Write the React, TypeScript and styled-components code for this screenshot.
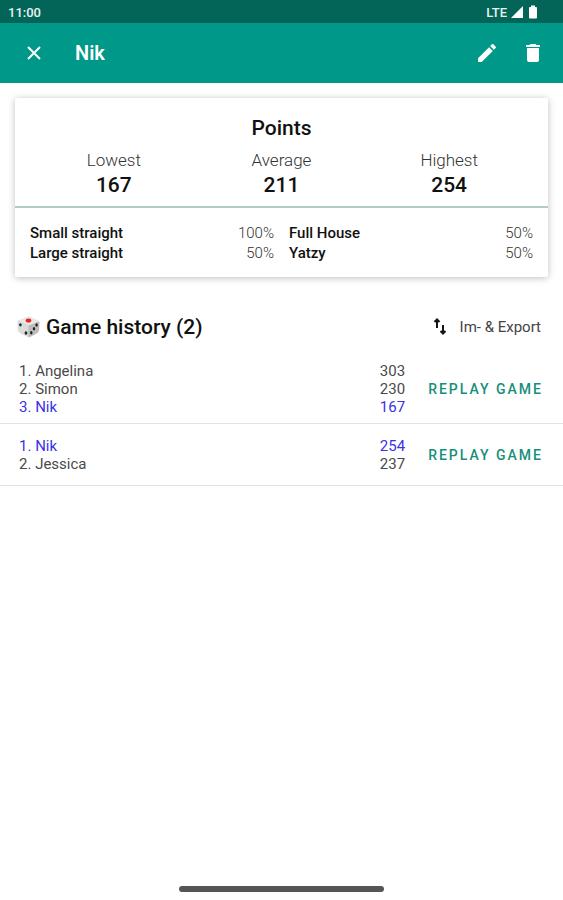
import React from "react";
import styled, { createGlobalStyle } from "styled-components";

const GlobalStyle = createGlobalStyle`
  *, *::before, *::after { box-sizing: border-box; }
  body {
    margin: 0;
    background: #fff;
    color: #111;
    font-family: Roboto, "Liberation Sans", sans-serif;
  }
  h1, h2, dl, dd, dt, ol, ul, p { margin: 0; padding: 0; }
  ol, ul { list-style: none; }
  button { border: 0; padding: 0; background: none; font: inherit; color: inherit; cursor: pointer; }
  svg { display: block; }
`;

const Screen = styled.div`
  min-height: 100vh;
  display: flex;
  flex-direction: column;
`;

const StatusBar = styled.div`
  display: flex;
  align-items: center;
  justify-content: space-between;
  height: 23px;
  padding: 1px 24px 0 8px;
  background: #036558;
  color: #e8f3f1;
  font-size: 13px;
  font-weight: 500;
`;

const StatusIcons = styled.div`
  display: flex;
  align-items: center;
  gap: 4px;
`;

const AppBar = styled.header`
  display: flex;
  align-items: center;
  height: 60px;
  padding: 0 18px 0 22px;
  background: #009888;
  color: #fff;
`;

const BarTitle = styled.h1`
  flex: 1;
  margin-left: 29px;
  font-size: 20px;
  font-weight: 600;
  line-height: 24px;
`;

const IconButton = styled.button`
  display: grid;
  place-items: center;
  width: 24px;
  height: 24px;
`;

const BarActions = styled.div`
  display: flex;
  gap: 22px;
`;

const Card = styled.section`
  margin: 15px 15px 0;
  border-radius: 2px;
  background: #fff;
  box-shadow: 0 1px 7px rgba(0, 0, 0, 0.26);
`;

const CardTitle = styled.h2`
  padding-top: 18px;
  text-align: center;
  font-size: 21px;
  font-weight: 500;
  line-height: 24px;
`;

const Scores = styled.dl`
  display: grid;
  grid-template-columns: repeat(3, 1fr);
  padding: 8px 15px;
  border-bottom: 2px solid #b3ccc6;
  text-align: center;
`;

const ScoreLabel = styled.dt`
  color: #333;
  font-size: 17px;
  font-weight: 300;
  line-height: 24px;
`;

const ScoreValue = styled.dd`
  font-size: 21px;
  font-weight: 500;
  line-height: 26px;
`;

const Rates = styled.dl`
  display: grid;
  grid-template-columns: 1fr 1fr;
  column-gap: 15px;
  padding: 15px 15px 14px;
  font-size: 15px;
  line-height: 20px;
`;

const Rate = styled.div`
  display: flex;
  justify-content: space-between;
`;

const RateName = styled.dt`
  font-weight: 500;
`;

const RateValue = styled.dd`
  color: #333;
  font-weight: 300;
`;

const HistoryHead = styled.div`
  display: flex;
  align-items: center;
  justify-content: space-between;
  margin-top: 37px;
  padding: 0 22px 0 17px;
`;

const HistoryTitle = styled.h2`
  display: flex;
  align-items: center;
  gap: 5px;
  font-size: 21px;
  font-weight: 500;
  line-height: 26px;
`;

const ExportButton = styled.button`
  display: flex;
  align-items: center;
  gap: 13px;
  font-size: 15px;
  color: #444;
`;

const Games = styled.ul`
  margin-top: 10px;
`;

const Game = styled.li`
  display: flex;
  align-items: center;
  padding: 12px 20px 7px 19px;
  border-bottom: 1px solid #e2e2e2;

  & + & {
    padding: 13px 20px 12px 19px;
  }
`;

const Players = styled.ol`
  flex: 1;
  margin-right: 23px;
`;

const Player = styled.li<{ $current: boolean }>`
  display: flex;
  justify-content: space-between;
  font-size: 15px;
  line-height: 18px;
  color: ${(p) => (p.$current ? "#3a32e6" : "#4a4a4a")};
`;

const ReplayButton = styled.button`
  color: #17907a;
  font-size: 14px;
  font-weight: 500;
  letter-spacing: 2px;
  line-height: 18px;
  text-transform: uppercase;
`;

const GestureArea = styled.footer`
  display: flex;
  justify-content: center;
  margin-top: auto;
  padding: 0 179px 8px;
`;

const GestureHandle = styled.div`
  flex: 1;
  height: 6px;
  border-radius: 3px;
  background: #555;
`;

const Signal = () => (
  <svg width="12" height="12" viewBox="0 0 12 12" fill="#fff" aria-hidden="true">
    <path d="M12 0v12H0z" />
  </svg>
);

const Battery = () => (
  <svg width="12" height="14" viewBox="0 0 12 14" fill="#fff" aria-hidden="true">
    <path d="M4 0.5h4v1.5h1q1 0 1 1v9.500q0 1-1 1H3q-1 0-1-1V3q0-1 1-1h1z" />
  </svg>
);

const Cross = () => (
  <svg width="24" height="24" viewBox="0 0 24 24" stroke="#fff" strokeWidth="2" aria-hidden="true">
    <path d="M6 6l12 12M18 6L6 18" />
  </svg>
);

const Pencil = () => (
  <svg width="24" height="24" viewBox="0 0 24 24" fill="#fff" aria-hidden="true">
    <path d="M20.710 7.040c.39-.39.39-1.040 0-1.410l-2.340-2.340c-.37-.39-1.020-.39-1.410 0l-1.840 1.830 3.750 3.750M3 17.250V21h3.750L17.810 9.930l-3.750-3.750L3 17.250z" />
  </svg>
);

const Trash = () => (
  <svg width="24" height="24" viewBox="0 0 24 24" fill="#fff" aria-hidden="true">
    <path d="M19 4h-3.500l-1-1h-5l-1 1H5v2h14M6 19a2 2 0 0 0 2 2h8a2 2 0 0 0 2-2V7H6v12z" />
  </svg>
);

const Swap = () => (
  <svg width="14" height="18" viewBox="0 0 14 18" fill="none" stroke="#151515" strokeWidth="2" aria-hidden="true">
    <path d="M4 10V2M10 7v8" />
    <path d="M1.500 4L4 1.500l2.500 2.500M7.500 13L10 15.500l2.500-2.500" />
  </svg>
);

const Die = () => (
  <svg width="24" height="22" viewBox="0 0 24 22" aria-hidden="true">
    <path d="M11.500 1L22 5.500L12 10L1 5z" fill="#e8e8e8" stroke="#e2e2e2" strokeLinejoin="round" />
    <path d="M1 5.500L12 10v11L3 16.500Q1.500 15.500 1.300 13z" fill="#dcdcdc" stroke="#d6d6d6" strokeLinejoin="round" />
    <path d="M22 6L12 10v11l8.500-4.500Q21.500 15.500 21.600 13z" fill="#bdbdbd" stroke="#bababa" strokeLinejoin="round" />
    <ellipse cx="11.500" cy="4.600" rx="2.800" ry="2" fill="#f0221c" />
    <g fill="#222">
      <ellipse cx="3.400" cy="8.800" rx="1.300" ry="1.600" />
      <ellipse cx="9" cy="17" rx="1.400" ry="1.700" />
      <ellipse cx="19.600" cy="9" rx="1.200" ry="1.700" />
      <ellipse cx="17" cy="12.800" rx="1.200" ry="1.700" />
      <ellipse cx="14.300" cy="16.800" rx="1.200" ry="1.700" />
    </g>
  </svg>
);

const scores = [
  { label: "Lowest", value: 167 },
  { label: "Average", value: 211 },
  { label: "Highest", value: 254 },
];

const rates = [
  { name: "Small straight", value: "100%" },
  { name: "Full House", value: "50%" },
  { name: "Large straight", value: "50%" },
  { name: "Yatzy", value: "50%" },
];

const games = [
  [
    { name: "Angelina", points: 303 },
    { name: "Simon", points: 230 },
    { name: "Nik", points: 167 },
  ],
  [
    { name: "Nik", points: 254 },
    { name: "Jessica", points: 237 },
  ],
];

export default function App() {
  return (
    <Screen>
      <GlobalStyle />
      <StatusBar>
        <span>11:00</span>
        <StatusIcons>
          <span>LTE</span>
          <Signal />
          <Battery />
        </StatusIcons>
      </StatusBar>
      <AppBar>
        <IconButton aria-label="Close"><Cross /></IconButton>
        <BarTitle>Nik</BarTitle>
        <BarActions>
          <IconButton aria-label="Edit"><Pencil /></IconButton>
          <IconButton aria-label="Delete"><Trash /></IconButton>
        </BarActions>
      </AppBar>
      <Card>
        <CardTitle>Points</CardTitle>
        <Scores>
          {scores.map((s) => (
            <div key={s.label}>
              <ScoreLabel>{s.label}</ScoreLabel>
              <ScoreValue>{s.value}</ScoreValue>
            </div>
          ))}
        </Scores>
        <Rates>
          {rates.map((r) => (
            <Rate key={r.name}>
              <RateName>{r.name}</RateName>
              <RateValue>{r.value}</RateValue>
            </Rate>
          ))}
        </Rates>
      </Card>
      <HistoryHead>
        <HistoryTitle><Die />Game history (2)</HistoryTitle>
        <ExportButton><Swap />Im- &amp; Export</ExportButton>
      </HistoryHead>
      <Games>
        {games.map((players, g) => (
          <Game key={g}>
            <Players>
              {players.map((p, i) => (
                <Player key={p.name} $current={p.name === "Nik"}>
                  <span>{i + 1}. {p.name}</span>
                  <span>{p.points}</span>
                </Player>
              ))}
            </Players>
            <ReplayButton>Replay game</ReplayButton>
          </Game>
        ))}
      </Games>
      <GestureArea><GestureHandle /></GestureArea>
    </Screen>
  );
}
